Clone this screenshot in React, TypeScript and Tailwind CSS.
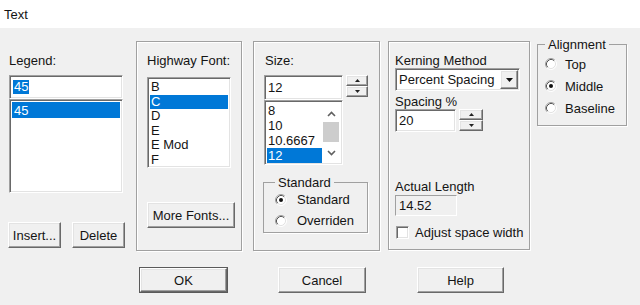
import React from "react";

const sunken =
  "border border-t-[#a0a0a0] border-l-[#a0a0a0] border-r-white border-b-white shadow-[inset_1px_1px_0_#696969,inset_-1px_-1px_0_#e3e3e3]";
const raised =
  "border border-t-white border-l-white border-r-[#696969] border-b-[#696969] shadow-[inset_-1px_-1px_0_#a0a0a0,inset_1px_1px_0_#e3e3e3]";
const group = "border border-[#a0a0a0] shadow-[1px_1px_0_#fff,inset_1px_1px_0_#fff]";

function Radio({ checked }: { checked?: boolean }) {
  return (
    <svg width="12" height="12" viewBox="0 0 12 12" className="shrink-0">
      <circle cx="6" cy="6" r="5" fill="#fff" />
      <path d="M2.11 9.89 A5.5 5.5 0 0 1 9.89 2.11" fill="none" stroke="#a0a0a0" strokeWidth="1" />
      <path d="M2.82 9.18 A4.5 4.5 0 0 1 9.18 2.82" fill="none" stroke="#555" strokeWidth="1" />
      <path d="M9.89 2.11 A5.5 5.5 0 0 1 2.11 9.89" fill="none" stroke="#fff" strokeWidth="1" />
      <path d="M9.18 2.82 A4.5 4.5 0 0 1 2.82 9.18" fill="none" stroke="#e3e3e3" strokeWidth="1" />
      {checked && <circle cx="6" cy="6" r="2" fill="#111" />}
    </svg>
  );
}

function Spinner({ w, h }: { w: string; h: string }) {
  return (
    <div className={`flex flex-col ${w} ${h}`}>
      <div className={`${raised} flex-1 flex items-center justify-center bg-[#f0f0f0]`}>
        <svg width="5" height="3" viewBox="0 0 5 3">
          <path d="M2.5 0 L5 3 L0 3 Z" fill="#222" />
        </svg>
      </div>
      <div className={`${raised} flex-1 flex items-center justify-center bg-[#f0f0f0]`}>
        <svg width="5" height="3" viewBox="0 0 5 3">
          <path d="M0 0 L5 0 L2.5 3 Z" fill="#222" />
        </svg>
      </div>
    </div>
  );
}

function Button({ label, w, def }: { label: string; w: string; def?: boolean }) {
  const inner = (
    <div className={`${raised} bg-[#f0f0f0] flex-1 flex items-center justify-center`}>{label}</div>
  );
  return def ? (
    <div className={`${w} h-[26px] border border-[#5a5a5a] flex`}>{inner}</div>
  ) : (
    <div className={`${w} h-[26px] flex`}>{inner}</div>
  );
}

export default function App() {
  return (
    <div className="w-[640px] h-[305px] overflow-hidden font-['Liberation_Sans',Arial,sans-serif] text-[13px] leading-[15px] text-[#141414] bg-[#f0f0f0]">
      <div className="h-[28px] bg-white flex items-center pl-[4px] text-[13px]">Text</div>
      <div className="flex flex-col">
        <div className="flex items-start pt-[13px]">
          {/* Legend column */}
          <div className="ml-[8px] w-[117px] flex flex-col">
            <div className="mt-[12px] pl-[1px]">Legend:</div>
            <div className={`${sunken} ml-[1px] mt-[7px] w-[114px] h-[24px] bg-white flex items-center pl-[3px]`}>
              <span className="bg-[#0078d7] text-white px-[1px] leading-[14px]">45</span>
            </div>
            <div className={`${sunken} ml-[1px] w-[114px] h-[94px] bg-white p-[2px]`}>
              <div className="bg-[#0078d7] text-white h-[16px] flex items-center pl-[2px]">45</div>
            </div>
            <div className="mt-[29px] flex justify-between">
              <Button label="Insert..." w="w-[53px]" />
              <Button label="Delete" w="w-[53px]" />
            </div>
          </div>

          {/* Highway Font */}
          <div className={`${group} ml-[11px] w-[106px] h-[210px] flex flex-col pl-[10px] pt-[11px]`}>
            <div>Highway Font:</div>
            <div className={`${sunken} mt-[9px] w-[84px] h-[91px] bg-white p-[2px] leading-[14.5px] overflow-hidden`}>
              <div className="pl-[1px]">B</div>
              <div className="pl-[1px] bg-[#0078d7] text-white">C</div>
              <div className="pl-[1px]">D</div>
              <div className="pl-[1px]">E</div>
              <div className="pl-[1px]">E Mod</div>
              <div className="pl-[1px]">F</div>
            </div>
            <div className="mt-[34px]">
              <Button label="More Fonts..." w="w-[88px]" />
            </div>
          </div>

          {/* Size */}
          <div className={`${group} ml-[11px] w-[127px] h-[210px] flex flex-col pl-[10px] pt-[11px]`}>
            <div className="pl-[1px]">Size:</div>
            <div className="mt-[7px] flex items-start">
              <div className={`${sunken} w-[79px] h-[25px] bg-white flex items-center pl-[3px]`}>12</div>
              <div className="ml-[3px]">
                <Spinner w="w-[22px]" h="h-[22px]" />
              </div>
            </div>
            <div className={`${sunken} w-[79px] h-[65px] bg-white p-[2px] flex overflow-hidden`}>
              <div className="flex-1 leading-[15px]">
                <div className="pl-[1px]">8</div>
                <div className="pl-[1px]">10</div>
                <div className="pl-[1px]">10.6667</div>
                <div className="pl-[1px] bg-[#0078d7] text-white">12</div>
              </div>
              <div className="w-[18px] flex flex-col items-center">
                <svg width="9" height="6" viewBox="0 0 9 6" className="mt-[8px]">
                  <path d="M1 5 L4.5 1.5 L8 5" fill="none" stroke="#606060" strokeWidth="1.6" />
                </svg>
                <div className="mt-[5px] w-[16px] h-[20px] bg-[#cdcdcd]" />
                <svg width="9" height="6" viewBox="0 0 9 6" className="mt-[8px]">
                  <path d="M1 1 L4.5 4.5 L8 1" fill="none" stroke="#606060" strokeWidth="1.6" />
                </svg>
              </div>
            </div>
            <fieldset className="ml-[-1px] mt-[10px] w-[105px] h-[58px] border border-[#a0a0a0] shadow-[1px_1px_0_#fff] pl-[11px]">
              <legend className="px-[3px] bg-[#f0f0f0]">Standard</legend>
              <div className="flex items-center h-[21px] mt-[-1px]">
                <Radio checked />
                <span className="ml-[10px]">Standard</span>
              </div>
              <div className="flex items-center h-[21px]">
                <Radio />
                <span className="ml-[10px]">Overriden</span>
              </div>
            </fieldset>
          </div>

          {/* Kerning */}
          <div className={`${group} ml-[8px] w-[142px] h-[209px] flex flex-col pl-[6px] pt-[11px]`}>
            <div>Kerning Method</div>
            <div className={`${sunken} w-[125px] h-[23px] bg-white flex items-center`}>
              <span className="flex-1 pl-[3px]">Percent Spacing</span>
              <div className={`${raised} w-[18px] h-[19px] mr-[1px] bg-[#f0f0f0] flex items-center justify-center`}>
                <svg width="7" height="4" viewBox="0 0 7 4">
                  <path d="M0 0 L7 0 L3.5 4 Z" fill="#111" />
                </svg>
              </div>
            </div>
            <div className="mt-[3px]">Spacing %</div>
            <div className="flex items-start">
              <div className={`${sunken} w-[61px] h-[23px] bg-white flex items-center pl-[3px]`}>20</div>
              <div className="ml-[3px]">
                <Spinner w="w-[24px]" h="h-[22px]" />
              </div>
            </div>
            <div className="mt-[47px]">Actual Length</div>
            <div className="mt-[1px] w-[62px] h-[21px] border border-t-[#a0a0a0] border-l-[#a0a0a0] border-r-white border-b-white flex items-center pl-[3px]">
              14.52
            </div>
            <div className="mt-[9px] flex items-center">
              <div className={`${sunken} ml-[1px] w-[13px] h-[13px] bg-white`} />
              <span className="ml-[6px]">Adjust space width</span>
            </div>
          </div>

          {/* Alignment */}
          <fieldset className="ml-[7px] mt-[-4px] w-[90px] border border-[#a0a0a0] shadow-[1px_1px_0_#fff] pl-[7px] pb-[6px]">
            <legend className="px-[3px] bg-[#f0f0f0]">Alignment</legend>
            <div className="flex items-center h-[22px] mt-[1px]">
              <Radio />
              <span className="ml-[8px]">Top</span>
            </div>
            <div className="flex items-center h-[22px]">
              <Radio checked />
              <span className="ml-[8px]">Middle</span>
            </div>
            <div className="flex items-center h-[22px]">
              <Radio />
              <span className="ml-[8px]">Baseline</span>
            </div>
          </fieldset>
        </div>

        {/* Bottom buttons */}
        <div className="mt-[16px] flex">
          <div className="ml-[139px]">
            <Button label="OK" w="w-[89px]" def />
          </div>
          <div className="ml-[50px]">
            <Button label="Cancel" w="w-[88px]" />
          </div>
          <div className="ml-[51px]">
            <Button label="Help" w="w-[87px]" />
          </div>
        </div>
      </div>
    </div>
  );
}
